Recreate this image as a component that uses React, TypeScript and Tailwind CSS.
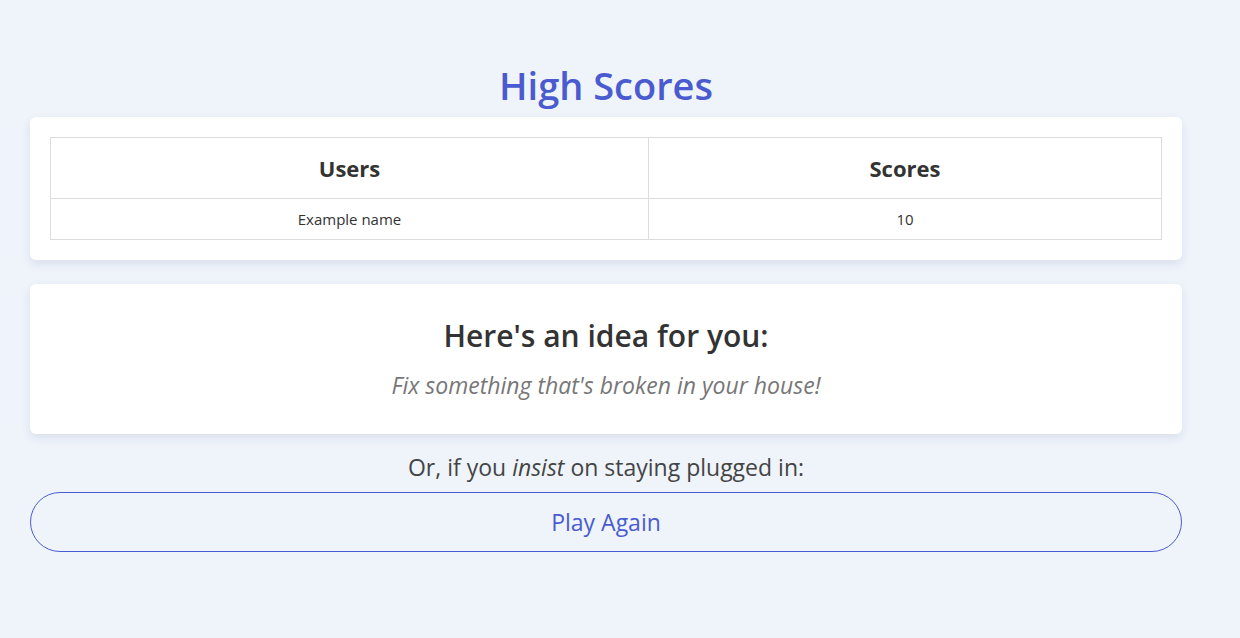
export default function App() {
  return (
    <div className="min-h-[638px] bg-[#eff4fb] font-['Open_Sans',sans-serif] text-[#333]">
      <div className="flex w-[1212px] flex-col items-stretch px-[30px] pt-[57px]">
        <h1 className="text-center text-[38px] leading-[56px] font-semibold text-[#4a5bcf]">
          High Scores
        </h1>

        <div className="mt-[4px] rounded-md bg-white p-5 shadow-[0_4px_10px_rgba(30,50,100,0.10)]">
          <table className="w-full border-collapse text-center">
            <thead>
              <tr>
                <th className="h-[61px] w-[598px] border border-[#dcdcdc] text-[22px] font-bold">
                  Users
                </th>
                <th className="h-[61px] border border-[#dcdcdc] text-[22px] font-bold">
                  Scores
                </th>
              </tr>
            </thead>
            <tbody>
              <tr>
                <td className="h-[41px] border border-[#dcdcdc] text-[15px]">Example name</td>
                <td className="h-[41px] border border-[#dcdcdc] text-[15px]">10</td>
              </tr>
            </tbody>
          </table>
        </div>

        <div className="mt-6 flex h-[150px] flex-col items-center rounded-md bg-white pt-[32px] shadow-[0_4px_10px_rgba(30,50,100,0.10)]">
          <h2 className="text-[30px] leading-[40px] font-semibold text-[#333]">
            Here's an idea for you:
          </h2>
          <p className="mt-[13px] text-[23px] leading-[32px] italic text-[#777]">
            Fix something that's broken in your house!
          </p>
        </div>

        <p className="mt-[17px] text-center text-[23px] leading-[32px] text-[#444]">
          Or, if you <em>insist</em> on staying plugged in:
        </p>

        <button
          type="button"
          className="mt-[9px] h-[60px] w-full rounded-full border border-[#4a5bcf] text-[23px] text-[#4a5bcf]"
        >
          Play Again
        </button>
      </div>
    </div>
  );
}
